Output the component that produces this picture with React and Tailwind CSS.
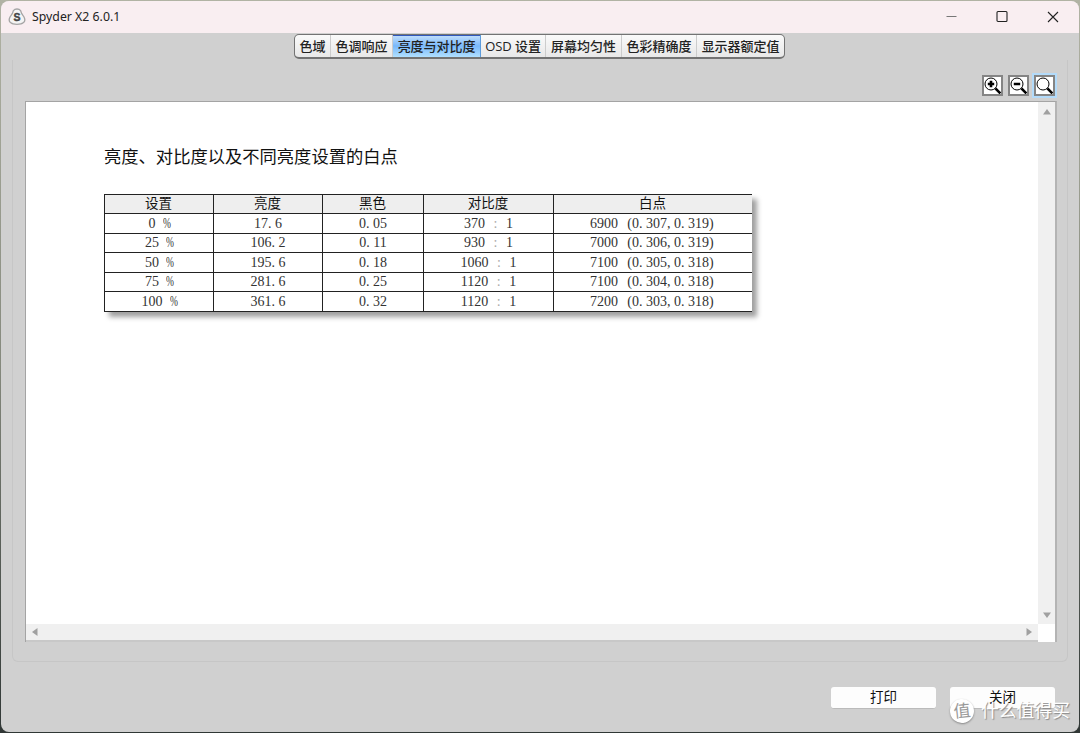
import React, { useState } from "react";

const TABS = [
  { label: "色域", width: "w-[36px]" },
  { label: "色调响应", width: "w-[62px]" },
  { label: "亮度与对比度", width: "w-[88px]" },
  { label: "OSD 设置", width: "w-[65px]" },
  { label: "屏幕均匀性", width: "w-[76px]" },
  { label: "色彩精确度", width: "w-[75px]" },
  { label: "显示器额定值", width: "w-[87px]" },
];

const COLUMNS = ["设置", "亮度", "黑色", "对比度", "白点"];

const ROWS = [
  ["0 %", "17.6", "0.05", "370 : 1", "6900 (0.307,0.319)"],
  ["25 %", "106.2", "0.11", "930 : 1", "7000 (0.306,0.319)"],
  ["50 %", "195.6", "0.18", "1060 : 1", "7100 (0.305,0.318)"],
  ["75 %", "281.6", "0.25", "1120 : 1", "7100 (0.304,0.318)"],
  ["100 %", "361.6", "0.32", "1120 : 1", "7200 (0.303,0.318)"],
];

const ROW_HEIGHTS = ["h-5", "h-[19px]", "h-5", "h-[19px]", "h-5"];

// every character takes a 7px advance, like a bitmap terminal font
const GLYPH_CLASS = {
  ".": "tracking-[3.5px]",
  ",": "tracking-[3.5px]",
  ":": "tracking-[1.5px] ml-[1.6px] text-[#aaa]",
  "(": "ml-[2.3px]",
  ")": "tracking-[2.3px]",
  "%": "inline-block w-[7px] origin-left scale-x-[0.68]",
};

const MonoText = ({ text }) => (
  <span className="whitespace-pre [word-spacing:3.5px]">
    {text.split(/([.,:()%])/).map((part, i) => (
      <span key={i} className={GLYPH_CLASS[part]}>
        {part}
      </span>
    ))}
  </span>
);

const SpyderLogo = () => (
  <svg width="18" height="18" viewBox="0 0 18 18">
    <path
      d="M5.4 2.6Q6.6 1 9 1T12.6 2.6L13.6 5.4 16 9Q18 13 15.2 14.8Q13.6 16.3 9 16.3T2.8 14.8Q0 13 2 9L4.4 5.4Z"
      fill="#f4f4f4"
      stroke="#a5a5a5"
      strokeWidth="1.3"
    />
    <text x="9" y="12.6" textAnchor="middle" fontSize="10.5" fontWeight="bold" fill="#444" stroke="#444" strokeWidth="0.4">
      S
    </text>
  </svg>
);

const TitleBar = () => (
  <div className="flex h-8 shrink-0 items-center bg-[#f9eef1] pl-[7px]">
    <SpyderLogo />
    <span className="ml-[6px] font-['Noto_Sans',sans-serif] text-[12.3px] text-[#222]">
      Spyder X2 6.0.1
    </span>
    <div className="ml-auto flex items-center gap-[38px] pr-[19px] text-[#222]">
      <svg width="14" height="14" viewBox="0 0 14 14" stroke="#777" fill="none">
        <path d="M2.5 6.5H12.5" />
      </svg>
      <svg width="12" height="14" viewBox="0 0 12 14" stroke="currentColor" fill="none" strokeWidth="1.1">
        <rect x="1" y="1.5" width="10" height="10" rx="1" />
      </svg>
      <svg width="14" height="14" viewBox="0 0 14 14" stroke="currentColor" fill="none" strokeWidth="1.1">
        <path d="M2 2L12 12M12 2L2 12" />
      </svg>
    </div>
  </div>
);

const ZoomButton = ({ kind, focused }) => (
  <button
    className={
      "flex h-[21px] w-[21px] items-center justify-center border-2 border-[#858585] bg-white " +
      (focused ? "ring-2 ring-[#b3dbfa]" : "")
    }
  >
    <svg width="17" height="17" viewBox="0 0 17 17" className="shrink-0" fill="none" stroke="#000">
      <circle cx="7" cy="7" r="6" strokeWidth="1" />
      <path d="M11.4 11.4L16.4 16.4" strokeWidth="2.6" />
      {kind !== "reset" && <path d="M3.8 7H10.2" strokeWidth="2.6" />}
      {kind === "in" && <path d="M7 3.8V10.2" strokeWidth="2.6" />}
    </svg>
  </button>
);

const ResultTable = () => (
  <table className="w-[648px] table-fixed border-separate border-spacing-0 border-t border-l border-[#222] bg-white text-center shadow-[5px_5px_5px_#00000060]">
    <colgroup>
      <col className="w-[109px]" />
      <col className="w-[109px]" />
      <col className="w-[101px]" />
      <col className="w-[130px]" />
      <col />
    </colgroup>
    <thead>
      <tr className="h-[19px] bg-[#eee] text-[13.5px] leading-[18px]">
        {COLUMNS.map((name) => (
          <th key={name} className="border-r border-b border-[#222] p-0 pr-px font-normal last:border-r-0">
            {name}
          </th>
        ))}
      </tr>
    </thead>
    <tbody className="font-['Liberation_Serif',serif] text-[14px] leading-[18px] text-[#333]">
      {ROWS.map((row, i) => (
        <tr key={row[0]} className={ROW_HEIGHTS[i]}>
          {row.map((cell, j) => (
            <td key={j} className="border-r border-b border-[#222] p-0 last:border-r-0">
              <MonoText text={cell} />
            </td>
          ))}
        </tr>
      ))}
    </tbody>
  </table>
);

const Arrow = ({ d }) => (
  <svg width="8" height="8" viewBox="0 0 8 8" fill="#a0a0a0">
    <path d={d} />
  </svg>
);

const ReportPane = () => (
  <div className="grid h-[541px] w-[1032px] grid-cols-[1fr_17px] grid-rows-[1fr_18px] border-t border-r-2 border-l border-t-[#a4a4a4] border-r-[#b4b4b4] border-l-[#a4a4a4] bg-white">
    <div className="pt-[43px] pl-[78px]">
      <h1 className="text-[17.3px] leading-6">亮度、对比度以及不同亮度设置的白点</h1>
      <div className="mt-[25px]">
        <ResultTable />
      </div>
    </div>
    <div className="flex flex-col items-center justify-between bg-[#f0f0f0] pt-[6px] pb-[5px]">
      <Arrow d="M4 1L8 6.5H0Z" />
      <Arrow d="M4 7L8 1.5H0Z" />
    </div>
    <div className="flex items-center justify-between border-b-2 border-[#c8c8c8] bg-[#f0f0f0] pr-[5px] pl-[5px]">
      <Arrow d="M1 4L6.5 0V8Z" />
      <Arrow d="M7 4L1.5 0V8Z" />
    </div>
    <div className="bg-white" />
  </div>
);

const DialogButton = ({ children }) => (
  <button className="h-[22px] w-[105px] rounded-[3px] border-b border-[#bbb] bg-[#fdfdfd] text-[13.5px] leading-[21px]">
    {children}
  </button>
);

const Watermark = () => (
  <div className="pointer-events-none absolute top-[697px] left-[950px] flex items-center text-white">
    <span className="flex h-6 w-6 -rotate-6 items-center justify-center rounded-full bg-white text-[17px] leading-none text-[#999] shadow-[0_1px_2px_#888]">
      值
    </span>
    <span className="ml-[7px] text-[17.8px] leading-7 whitespace-nowrap [text-shadow:1px_1px_1px_#888]">
      什么值得买
    </span>
  </div>
);

const App = () => {
  const [active, setActive] = useState("亮度与对比度");

  return (
    <div className="relative h-[733px] w-[1080px] overflow-hidden bg-linear-to-b from-[#b1b3a4] via-[#85897d] to-[#303735] p-px font-['Liberation_Sans','Noto_Sans_CJK_SC',sans-serif] text-[#111]">
      <div className="flex h-[731px] flex-col overflow-hidden rounded-lg bg-[#d0d0d0]">
        <TitleBar />

        {/* タブ */}
        <div className="mt-px ml-[293px] flex h-[25px] w-[491px] shrink-0 overflow-hidden rounded-[5px] border border-b-2 border-[#737373] bg-linear-to-b from-[#fafafa] to-[#e8e8e8] font-['Open_Sans','Noto_Sans_CJK_SC',sans-serif]">
          {TABS.map(({ label, width }) => (
            <button
              key={label}
              onClick={() => setActive(label)}
              className={`${width} shrink-0 border-r text-[13px] leading-[20px] font-medium tracking-[-0.05px] whitespace-nowrap text-[#222] last:border-r-0 ${
                active === label
                  ? "border-[#5c9cdc] bg-linear-to-b from-[#c5e0fb] via-[#79b8fa] to-[#b0e0ff] shadow-[inset_0_1px_0_#3158bd]"
                  : "border-[#ccc]"
              }`}
            >
              {label}
            </button>
          ))}
        </div>

        <div className="mx-[11px] mt-px h-[602px] shrink-0 rounded-b-md border-x border-b border-[#c6c6c6] pl-3">
          <div className="flex h-[41px] items-center justify-end gap-[5px] pt-[10px] pr-[12px]">
            <ZoomButton kind="in" />
            <ZoomButton kind="out" />
            <ZoomButton kind="reset" focused />
          </div>
          <ReportPane />
        </div>

        <div className="mt-[25px] flex justify-end gap-[14px] pr-[24px]">
          <DialogButton>打印</DialogButton>
          <DialogButton>关闭</DialogButton>
        </div>
      </div>
      <Watermark />
    </div>
  );
};

export default App;
